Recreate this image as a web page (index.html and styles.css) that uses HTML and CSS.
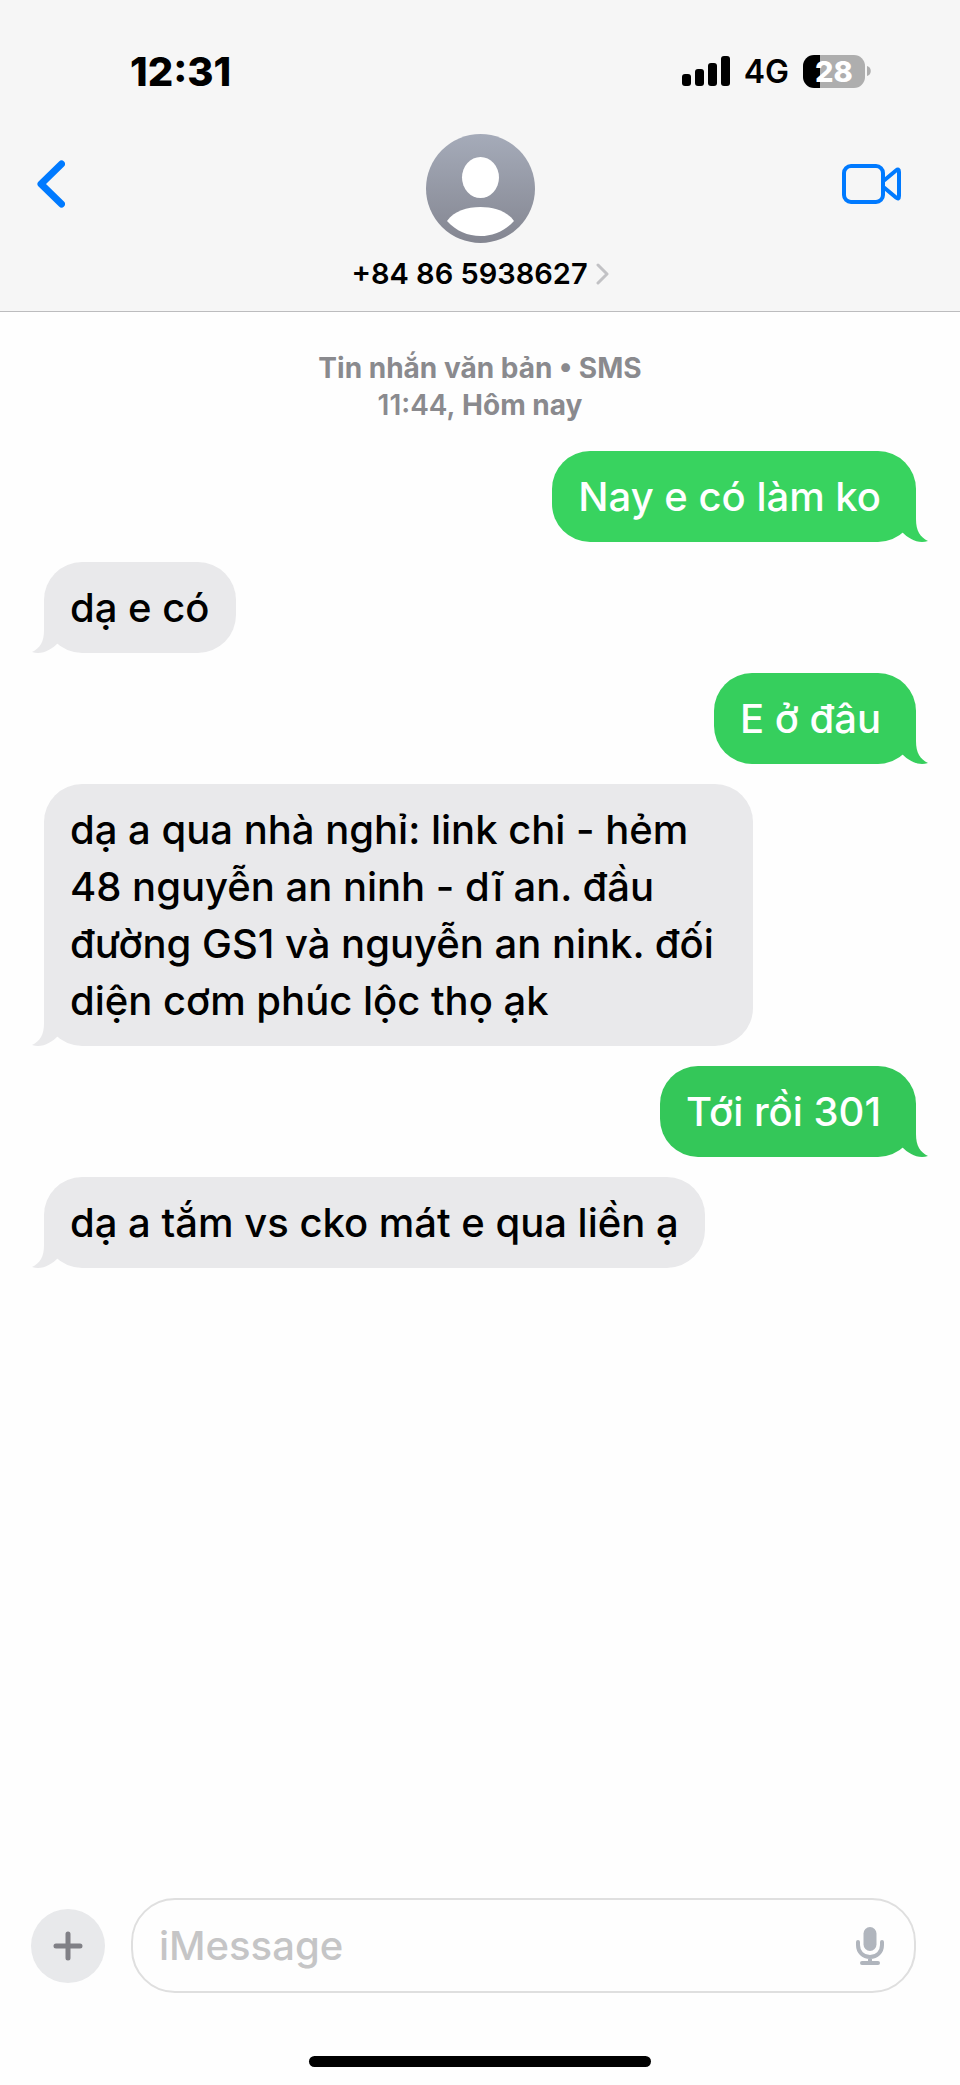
FILE: index.html
```html
<!DOCTYPE html>
<html lang="vi">
<head>
<meta charset="utf-8">
<meta name="viewport" content="width=device-width, initial-scale=1">
<title>+84 86 5938627</title>
<link rel="stylesheet" href="styles.css">
</head>
<body>
<svg class="defs" aria-hidden="true">
  <symbol id="tail" viewBox="0 0 28 43"><path d="M2 0H16V20C16 32 20 38 28 42C18 45 9 40 2 33Z" fill="currentColor"/></symbol>
</svg>
<div class="screen">
  <header class="header">
    <div class="status">
      <time class="clock">12:31</time>
      <div class="indicators">
        <svg class="signal" viewBox="0 0 48 30" aria-hidden="true">
          <rect x="0" y="18" width="9" height="12" rx="3"/>
          <rect x="13" y="13" width="9" height="17" rx="3"/>
          <rect x="26" y="7" width="9" height="23" rx="3"/>
          <rect x="39" y="0" width="9" height="30" rx="3"/>
        </svg>
        <span class="network">4G</span>
        <div class="battery">
          <span class="battery-level">28</span>
          <svg class="battery-tip" viewBox="0 0 4 10" aria-hidden="true"><path d="M0 0C5 1 5 9 0 10Z" fill="#aeaeae"/></svg>
        </div>
      </div>
    </div>
    <nav class="nav">
      <button class="icon-button back" type="button" aria-label="Quay lại">
        <svg width="28" height="48" viewBox="0 0 28 48" fill="none" stroke="#007aff" stroke-width="7" stroke-linecap="round" stroke-linejoin="round"><path d="M24.500 4L4 24L24.500 44"/></svg>
      </button>
      <button class="contact" type="button">
        <svg class="avatar" viewBox="0 0 109 109" aria-hidden="true">
          <defs><linearGradient id="shade" x1="0" y1="0" x2="0" y2="1"><stop offset="0" stop-color="#a5abb9"/><stop offset="1" stop-color="#848691"/></linearGradient></defs>
          <circle cx="54.500" cy="54.500" r="54.500" fill="url(#shade)"/>
          <ellipse cx="54.500" cy="43.500" rx="18.500" ry="20.500" fill="#fff"/>
          <path d="M21 87C28 77 41 73 54.500 73C68 73 81 77 88 87C79 97 67 102 54.500 102C42 102 30 97 21 87Z" fill="#fff"/>
        </svg>
        <span class="contact-name">+84 86 5938627
          <svg width="13" height="22" viewBox="0 0 13 22" fill="none" stroke="#c2c2c5" stroke-width="3" stroke-linecap="round" stroke-linejoin="round" aria-hidden="true"><path d="M2 2L11 11L2 20"/></svg>
        </span>
      </button>
      <button class="icon-button video" type="button" aria-label="Gọi video">
        <svg width="60" height="40" viewBox="0 0 60 40" fill="none" stroke="#007aff" stroke-width="4" stroke-linejoin="round"><rect x="2" y="2" width="39" height="36" rx="7"/><path d="M42 16.500L54 6.500Q57 4 57 8V32Q57 36 54 33.500L42 23.500"/></svg>
      </button>
    </nav>
  </header>

  <main class="thread">
    <p class="stamp">Tin nhắn văn bản • SMS<br><span class="stamp-time">11:44,</span> Hôm nay</p>
    <div class="bubble sent light">Nay e có làm ko<svg class="tail"><use href="#tail"/></svg></div>
    <div class="bubble received">dạ e có<svg class="tail"><use href="#tail"/></svg></div>
    <div class="bubble sent medium">E ở đâu<svg class="tail"><use href="#tail"/></svg></div>
    <div class="bubble received">dạ a qua nhà nghỉ: link chi - hẻm 48 nguyễn an ninh - dĩ an. đầu đường GS1 và nguyễn an nink. đối diện cơm phúc lộc thọ ạk<svg class="tail"><use href="#tail"/></svg></div>
    <div class="bubble sent">Tới rồi 301<svg class="tail"><use href="#tail"/></svg></div>
    <div class="bubble received">dạ a tắm vs cko mát e qua liền ạ<svg class="tail"><use href="#tail"/></svg></div>
  </main>

  <footer class="footer">
    <form class="composer">
      <button class="add" type="button" aria-label="Thêm">
        <svg width="30" height="30" viewBox="0 0 30 30" stroke="#808086" stroke-width="5" stroke-linecap="round"><path d="M15 3V27M3 15H27"/></svg>
      </button>
      <div class="field">
        <input class="message" type="text" placeholder="iMessage" aria-label="iMessage">
        <button class="icon-button" type="button" aria-label="Đọc chính tả">
          <svg width="28" height="38" viewBox="0 0 28 38" fill="none" stroke="#b0b5bd" stroke-width="4" stroke-linecap="round"><rect x="7.500" y="0" width="13" height="24" rx="6.500" fill="#b0b5bd" stroke="none"/><path d="M2 15V18C2 25 7 30 14 30C21 30 26 25 26 18V15M14 30V36M6 36H22"/></svg>
        </button>
      </div>
    </form>
    <div class="home-bar"></div>
  </footer>
</div>
</body>
</html>
```
FILE: styles.css
```css
* { box-sizing: border-box; }

body {
  margin: 0;
  background: #fefefe;
  color: #000;
  font-family: Inter, "Noto Sans", sans-serif;
}

button {
  padding: 0;
  border: 0;
  background: none;
  color: inherit;
  font: inherit;
}

svg { display: block; }

.defs {
  position: absolute;
  width: 0;
  height: 0;
}

.screen {
  display: flex;
  flex-direction: column;
  min-height: 100vh;
}

/* Header */
.header {
  padding-top: 48px;
  background: #f6f6f6;
  border-bottom: 1px solid #bcbcbe;
}

.status {
  display: flex;
  justify-content: space-between;
  align-items: center;
  height: 46px;
  padding: 0 89px 0 130px;
}

.clock {
  font-size: 40px;
  font-weight: 800;
}

.indicators {
  display: flex;
  align-items: center;
  gap: 14px;
}

.signal {
  width: 48px;
  height: 30px;
}

.network {
  font-size: 32px;
  font-weight: 600;
}

.battery {
  display: flex;
  align-items: center;
  gap: 2px;
}

.battery-level {
  width: 62px;
  border-radius: 11px;
  background: linear-gradient(to right, #000 28%, #aeaeae 28%);
  color: #fff;
  font-size: 29px;
  font-weight: 800;
  line-height: 33px;
  text-align: center;
}

.battery-tip {
  width: 4px;
  height: 10px;
}

.nav {
  display: grid;
  grid-template-columns: 1fr auto 1fr;
  padding: 40px 58px 18px 37px;
}

.icon-button { display: flex; }

.back { margin-top: 26px; }

.video {
  justify-self: end;
  margin-top: 30px;
}

.contact {
  display: flex;
  flex-direction: column;
  align-items: center;
  gap: 12px;
  margin-left: 21px;
}

.avatar {
  width: 109px;
  height: 109px;
}

.contact-name {
  display: flex;
  align-items: center;
  gap: 8px;
  font-size: 29px;
  font-weight: 600;
  line-height: 38px;
}

/* Conversation */
.thread {
  display: flex;
  flex: 1;
  flex-direction: column;
  align-items: flex-start;
  gap: 20px;
  padding: 38px 44px;
}

.stamp {
  align-self: center;
  margin: 0 0 7px;
  color: #8a8a8e;
  font-size: 28px;
  font-weight: 700;
  line-height: 37px;
  text-align: center;
}

.stamp-time { font-weight: 600; }

.bubble {
  position: relative;
  max-width: 709px;
  padding: 17px 26px;
  border-radius: 38px;
  font-size: 40px;
  font-weight: 500;
  line-height: 57px;
}

.received {
  --fill: #e9e9eb;
  background: var(--fill);
}

.sent {
  --fill: #34c759;
  align-self: flex-end;
  padding-right: 35px;
  background: var(--fill);
  color: #fff;
}

.light { --fill: #38d35f; }
.medium { --fill: #36cf5d; }

.tail {
  position: absolute;
  right: -12px;
  bottom: 0;
  width: 28px;
  height: 43px;
  color: var(--fill);
}

.received .tail {
  right: auto;
  left: -12px;
  transform: scaleX(-1);
}

/* Composer */
.footer {
  display: flex;
  flex-direction: column;
  gap: 63px;
  padding: 0 44px 18px 31px;
}

.composer {
  display: flex;
  align-items: center;
  gap: 26px;
}

.add {
  display: grid;
  place-items: center;
  width: 74px;
  height: 74px;
  border-radius: 50%;
  background: #e8e9eb;
}

.field {
  display: flex;
  flex: 1;
  align-items: center;
  padding: 0 30px 0 26px;
  border: 2px solid #dfdfdf;
  border-radius: 44px;
}

.message {
  flex: 1;
  min-width: 0;
  height: 91px;
  padding: 0;
  border: 0;
  outline: 0;
  background: none;
  font: 500 40px Inter, "Noto Sans", sans-serif;
}

.message::placeholder {
  color: #c5c5c6;
  opacity: 1;
}

.home-bar {
  align-self: center;
  width: 342px;
  height: 11px;
  margin-left: 13px;
  border-radius: 6px;
  background: #000;
}
```
